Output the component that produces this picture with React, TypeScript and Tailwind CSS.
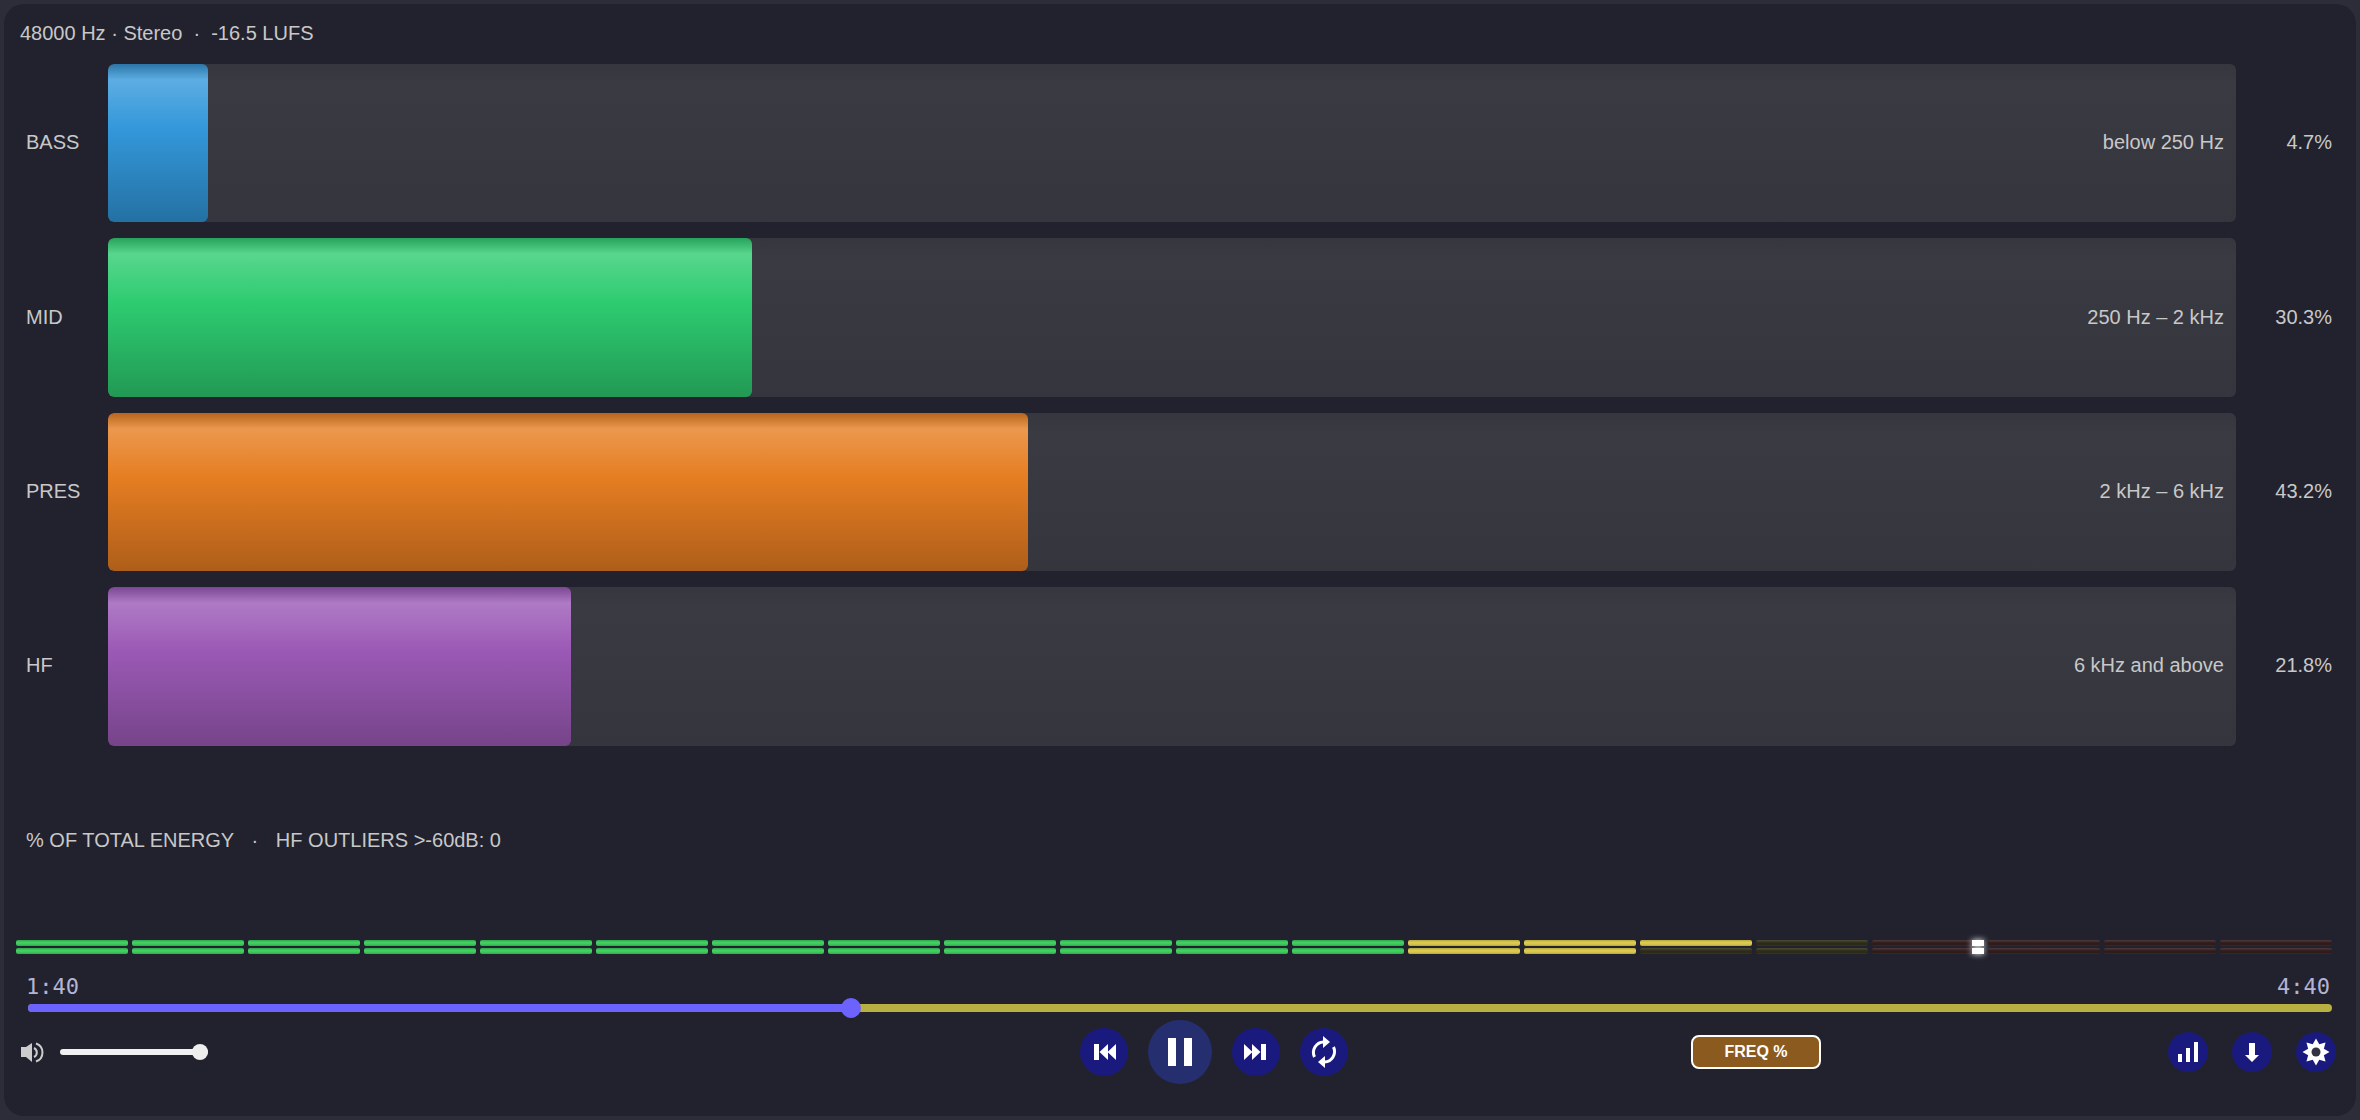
const bands = [
  {
    label: "BASS",
    range: "below 250 Hz",
    pct: "4.7",
    width: 4.72,
    fill: "bg-[linear-gradient(to_bottom,#2b75a8_0%,#5dade2_10%,#3498db_40%,#2471a3_100%)]",
  },
  {
    label: "MID",
    range: "250 Hz – 2 kHz",
    pct: "30.3",
    width: 30.25,
    fill: "bg-[linear-gradient(to_bottom,#27a25c_0%,#58d68d_10%,#2ecc71_40%,#229954_100%)]",
  },
  {
    label: "PRES",
    range: "2 kHz – 6 kHz",
    pct: "43.2",
    width: 43.24,
    fill: "bg-[linear-gradient(to_bottom,#b8651c_0%,#eb984e_10%,#e67e22_40%,#ae5e1a_100%)]",
  },
  {
    label: "HF",
    range: "6 kHz and above",
    pct: "21.8",
    width: 21.76,
    fill: "bg-[linear-gradient(to_bottom,#7c4792_0%,#af7ac5_10%,#9b59b6_40%,#764489_100%)]",
  },
];

const green = "bg-[linear-gradient(to_bottom,#30a54f,#45d062_40%,#3dc85c_70%,#30a54f)]";
const yellow = "bg-[linear-gradient(to_bottom,#b4a640,#dccd50_40%,#d4c64c_70%,#b2a440)]";
const dimYellow = "bg-[linear-gradient(to_bottom,#4c4c38,#2b2b18_50%,#2b2b18_80%,#3a3a28)]";
const dimRed = "bg-[linear-gradient(to_bottom,#52393a,#2e1c1c_50%,#2e1c1c_80%,#422c2e)]";

// one [top, bottom] pair per meter segment
const meter = Array.from({ length: 20 }, (_, i) => {
  if (i < 12) return [green, green];
  if (i < 14) return [yellow, yellow];
  if (i === 14) return [yellow, dimYellow];
  if (i === 15) return [dimYellow, dimYellow];
  return [dimRed, dimRed];
});

const gearPoints = Array.from({ length: 16 }, (_, i) => {
  const r = i % 2 === 0 ? 13.5 : 8.5;
  const a = (i * Math.PI) / 8 - Math.PI / 2;
  return `${20 + r * Math.cos(a)},${20 + r * Math.sin(a)}`;
}).join(" ");

function BandRow({ band }: { band: (typeof bands)[number] }) {
  return (
    <div className="flex h-[158.4px] items-center">
      <div className="w-[82px] pb-[1px]">{band.label}</div>
      <div className="relative flex h-full w-[2128px] items-center justify-end overflow-hidden rounded-[6px] bg-[linear-gradient(to_bottom,#36363f,#3a3a43_12%,#35353e)] pb-[1px] pr-[12px]">
        <div
          className={`absolute inset-y-0 left-0 rounded-[6px] ${band.fill}`}
          style={{ width: `${band.width}%` }}
        />
        <span className="relative">{band.range}</span>
      </div>
      <div className="flex-1 pb-[1px] text-right">{band.pct}%</div>
    </div>
  );
}

function MeterBar({ color, peak }: { color: string; peak: boolean }) {
  return (
    <div className={`relative h-[6px] rounded-[2px] ${color}`}>
      {peak && (
        <div className="absolute inset-y-0 right-0 w-[12px] bg-white shadow-[0_0_6px_#ffffff]" />
      )}
    </div>
  );
}

function RoundButton({ size, children }: { size: string; children: React.ReactNode }) {
  return (
    <button className={`shrink-0 rounded-full ${size}`}>{children}</button>
  );
}

export default function App() {
  return (
    <div className="h-[1120px] w-[2360px] bg-[#2d2d3a] p-[4px] font-['Liberation_Sans',sans-serif] text-[20px] leading-[23px] text-[#c8c8c8]">
      <div className="flex h-full flex-col rounded-[20px] bg-[#22222e]">
        <div className="flex h-[60px] items-center whitespace-pre pb-[1px] pl-[16px]">
          48000 Hz · Stereo  ·  -16.5 LUFS
        </div>

        <div className="flex flex-col gap-[16px] pl-[22px] pr-[24px]">
          {bands.map((band) => (
            <BandRow key={band.label} band={band} />
          ))}
        </div>

        <div className="mt-[83px] whitespace-pre pl-[22px]">
          % OF TOTAL ENERGY   <span className="mx-[1px]">·</span>   HF OUTLIERS {">"}-60dB: 0
        </div>

        <div className="mt-[88.4px] flex gap-[4px] pl-[12px] pr-[24px]">
          {meter.map((seg, i) => (
            <div key={i} className="flex flex-1 flex-col gap-[2px]">
              <MeterBar color={seg[0]} peak={i === 16} />
              <MeterBar color={seg[1]} peak={i === 16} />
            </div>
          ))}
        </div>

        <div className="mt-[21px] flex justify-between pl-[22px] pr-[26px] font-['DejaVu_Sans_Mono',monospace] text-[22px] text-[#b4b4d4]">
          <span>1:40</span>
          <span>4:40</span>
        </div>

        <div className="ml-[24px] mr-[24px] mt-[6px] flex h-[8px] overflow-hidden rounded-[4px] bg-[#b8b040]">
          <div className="h-full w-[35.7%] bg-[#6c63ff]" />
        </div>
        <div className="relative ml-[24px] mr-[24px] h-0">
          <div className="absolute left-[35.7%] top-[-14px] h-[20px] w-[20px] -translate-x-1/2 rounded-full bg-[#6c63ff]" />
        </div>

        <div className="mt-[8px] flex h-[64px] items-center pr-[20px]">
          <svg viewBox="0 0 24 24" className="ml-[16px] h-[24px] w-[24px]">
            <polygon points="1,7 6,7 12,3 12,22 6,17 1,17" fill="#cccccc" />
            <path d="M14 8a5 5 0 0 1 0 9" fill="none" stroke="#cccccc" strokeWidth="2" />
            <path d="M16 3.500a9.500 9.500 0 0 1 0 18" fill="none" stroke="#cccccc" strokeWidth="2" />
          </svg>

          <div className="relative ml-[16px] h-[6px] w-[148px] rounded-[3px] bg-[#f0f0f0]">
            <div className="absolute right-0 top-[-5px] h-[16px] w-[16px] rounded-full bg-[#eeeeee]" />
          </div>

          <div className="ml-[872px] flex items-center gap-[20px]">
            <RoundButton size="h-[48px] w-[48px]">
              <svg viewBox="0 0 48 48" className="h-[48px] w-[48px]">
                <circle cx="24" cy="24" r="24" fill="#1a1a7e" />
                <path d="M14 16h5v16h-5zM28 16v16l-8.500-8zM36 16v16l-8.500-8z" fill="#ffffff" />
              </svg>
            </RoundButton>
            <RoundButton size="h-[64px] w-[64px]">
              <svg viewBox="0 0 64 64" className="h-[64px] w-[64px]">
                <circle cx="32" cy="32" r="32" fill="#252f70" />
                <path d="M20 18h8v28h-8zM36 18h8v28h-8z" fill="#ffffff" />
              </svg>
            </RoundButton>
            <RoundButton size="h-[48px] w-[48px]">
              <svg viewBox="0 0 48 48" className="h-[48px] w-[48px]">
                <circle cx="24" cy="24" r="24" fill="#1a1a7e" />
                <path d="M29 16h5v16h-5zM20 16v16l8.500-8zM12 16v16l8.500-8z" fill="#ffffff" />
              </svg>
            </RoundButton>
            <RoundButton size="h-[48px] w-[48px]">
              <svg viewBox="0 0 48 48" className="h-[48px] w-[48px]">
                <circle cx="24" cy="24" r="24" fill="#1a1a7e" />
                <path d="M14.500 29a10.500 10.500 0 0 1 9-15M33.500 19a10.500 10.500 0 0 1-9 15" fill="none" stroke="#ffffff" strokeWidth="3" />
                <path d="M23 8l7 6-7 6zM25 28l-7 6 7 6z" fill="#ffffff" />
              </svg>
            </RoundButton>
          </div>

          <button className="ml-[343px] h-[34px] w-[130px] rounded-[8px] border-2 border-white bg-[#8b5a1e] text-[16px] font-bold leading-[18px] text-[#ffffff]">
            FREQ %
          </button>

          <div className="ml-auto flex items-center gap-[24px]">
            <RoundButton size="h-[40px] w-[40px]">
              <svg viewBox="0 0 40 40" className="h-[40px] w-[40px]">
                <circle cx="20" cy="20" r="20" fill="#1a1a7e" />
                <path d="M10 22h4v8h-4zM18 16h4v14h-4zM26 10h4v20h-4z" fill="#ffffff" />
              </svg>
            </RoundButton>
            <RoundButton size="h-[40px] w-[40px]">
              <svg viewBox="0 0 40 40" className="h-[40px] w-[40px]">
                <circle cx="20" cy="20" r="20" fill="#1a1a7e" />
                <path d="M17 11h6v12h4l-7 7-7-7h4z" fill="#ffffff" />
              </svg>
            </RoundButton>
            <RoundButton size="h-[40px] w-[40px]">
              <svg viewBox="0 0 40 40" className="h-[40px] w-[40px]">
                <circle cx="20" cy="20" r="20" fill="#1a1a7e" />
                <polygon points={gearPoints} fill="#ffffff" />
                <circle cx="20" cy="20" r="4.500" fill="#333340" />
              </svg>
            </RoundButton>
          </div>
        </div>
      </div>
    </div>
  );
}
